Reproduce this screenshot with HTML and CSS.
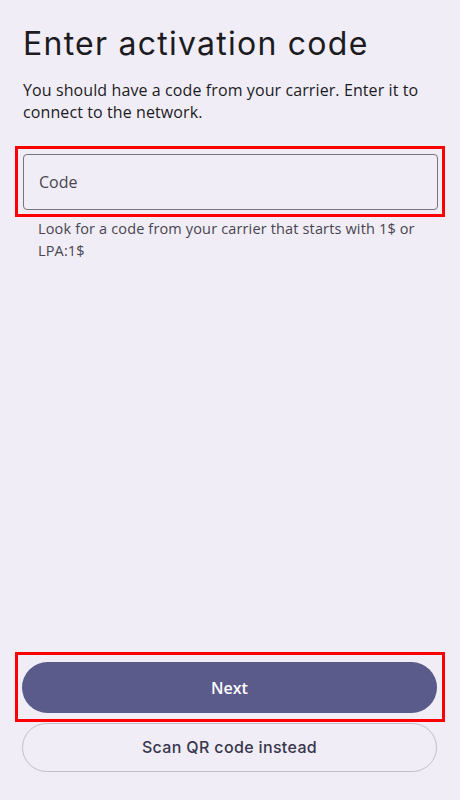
FILE: index.html
```html
<!DOCTYPE html>
<html lang="en">
<head>
<meta charset="utf-8">
<title>Enter activation code</title>
<link rel="stylesheet" href="styles.css">
</head>
<body>
<main class="page">
  <section class="content">
    <h1 class="title">Enter activation code</h1>
    <p class="lead">You should have a code from your carrier. Enter it to connect to the network.</p>
    <div class="highlight field-wrap">
      <label class="field">
        <input class="field-input" type="text" placeholder="Code">
      </label>
    </div>
    <p class="helper">Look for a code from your carrier that starts with 1$ or LPA:1$</p>
  </section>
  <footer class="actions">
    <div class="highlight next-wrap">
      <button class="btn btn-primary" type="button">Next</button>
    </div>
    <button class="btn btn-outline" type="button">Scan QR code instead</button>
  </footer>
</main>
</body>
</html>
```

FILE: styles.css
```css
* { box-sizing: border-box; }
html, body {
  margin: 0;
  padding: 0;
  background: #f0edf6;
}
body {
  font-family: "Open Sans", "Liberation Sans", sans-serif;
  color: #1c1b1f;
}
.page {
  height: 800px;
  display: flex;
  flex-direction: column;
  padding: 0 15px;
}
.content {
  flex: 1;
}
.title {
  margin: 24px 8px 0;
  font-family: Inter, "Open Sans", sans-serif;
  font-size: 32px;
  line-height: 40px;
  font-weight: 400;
  letter-spacing: 1.25px;
  color: #1c1b1f;
}
.lead {
  margin: 15px 8px 0;
  font-size: 16px;
  line-height: 22px;
  letter-spacing: 0.1px;
  color: #1c1b1f;
}
.highlight {
  border: 3px solid #ff0000;
}
.field-wrap {
  margin-top: 23px;
  padding: 5px 4px 4px 5px;
}
.field {
  display: block;
  height: 56px;
  border: 1px solid #79747e;
  border-radius: 4px;
}
.field-input {
  width: 100%;
  height: 100%;
  border: 0;
  background: transparent;
  padding: 0 15px;
  font: inherit;
  font-size: 16px;
  color: #1c1b1f;
  outline: none;
}
.field-input::placeholder {
  color: #49454f;
  opacity: 1;
}
.helper {
  margin: 1px 8px 0 23px;
  font-size: 14.5px;
  line-height: 22px;
  letter-spacing: 0.15px;
  color: #49454f;
}
.actions {
  display: flex;
  flex-direction: column;
  padding-bottom: 28px;
}
.next-wrap {
  padding: 7px 5px 6px 4px;
}
.btn {
  display: block;
  width: 100%;
  border-radius: 999px;
  font-family: inherit;
  font-size: 16px;
  font-weight: 600;
  cursor: pointer;
}
.btn-primary {
  height: 51px;
  border: 0;
  background: #5a5a8b;
  color: #ffffff;
}
.btn-outline {
  margin: 1px 8px 0 7px;
  width: auto;
  height: 49px;
  padding-bottom: 3px;
  border: 1px solid #c3bfc8;
  background: transparent;
  color: #38374d;
  font-family: Inter, "Open Sans", sans-serif;
  font-weight: 500;
  letter-spacing: 0.35px;
}
```
